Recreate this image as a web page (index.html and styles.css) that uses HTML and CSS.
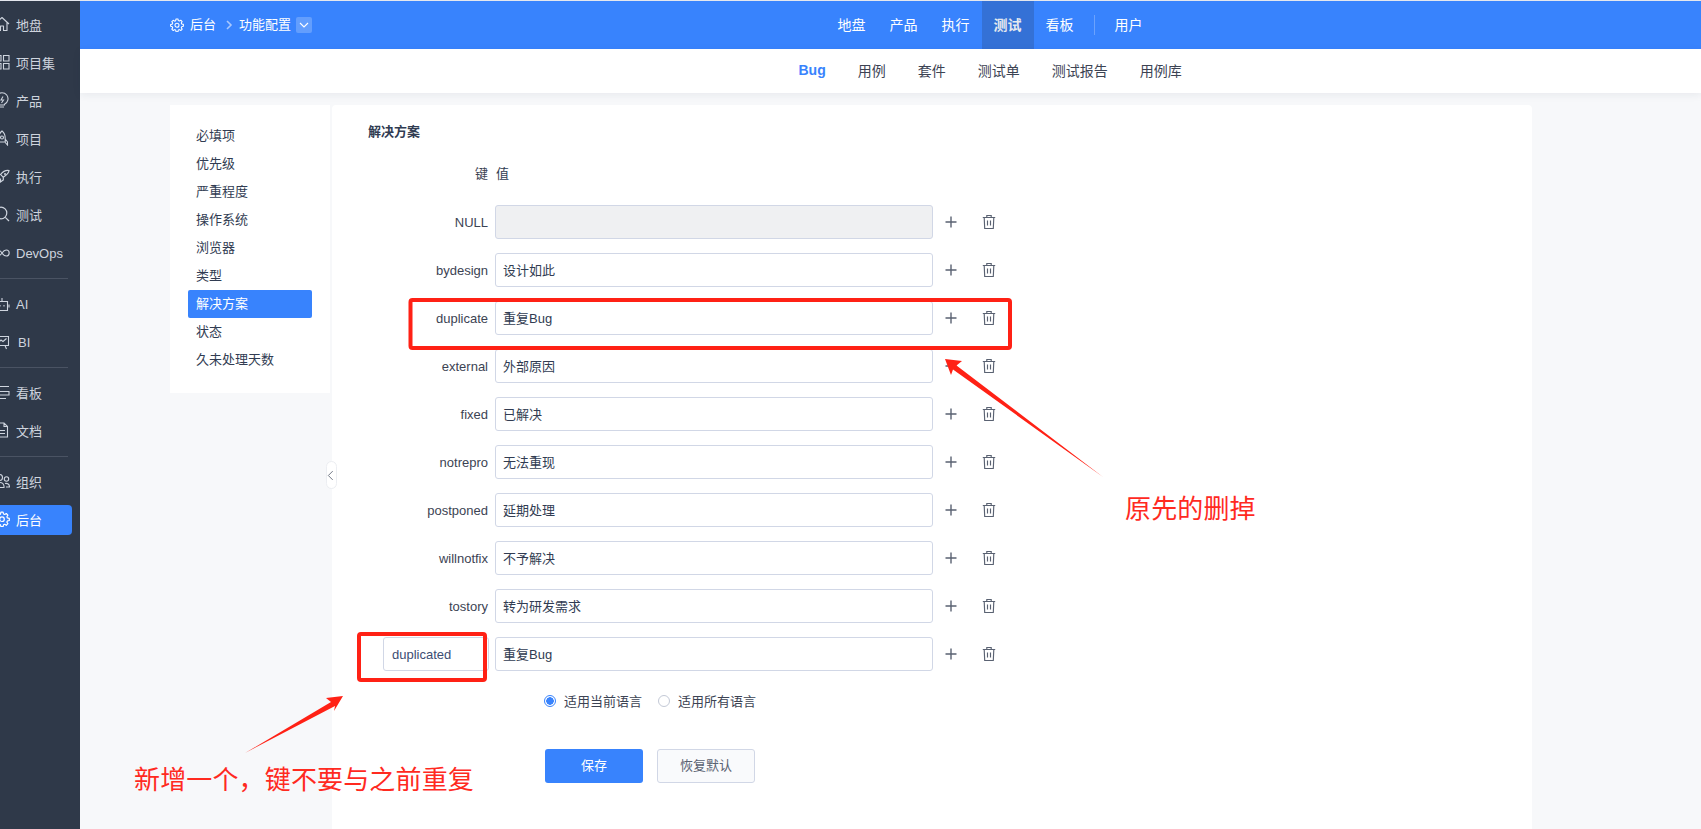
FILE: index.html
```html
<!DOCTYPE html>
<html lang="zh-CN">
<head>
<meta charset="utf-8">
<title>功能配置</title>
<link rel="stylesheet" href="styles.css">
</head>
<body>
<svg class="defs" width="0" height="0" aria-hidden="true">
  <defs>
    <symbol id="i-gear" viewBox="0 0 16 16"><path d="M6.9 1.2h2.2l.4 1.9 1.2.5 1.6-1 1.6 1.6-1 1.6.5 1.2 1.9.4v2.2l-1.9.4-.5 1.2 1 1.6-1.6 1.6-1.6-1-1.2.5-.4 1.9H6.900l-.4-1.900-1.200-.5-1.600 1-1.600-1.600 1-1.600-.5-1.200-1.900-.4V7.500l1.900-.4.5-1.200-1-1.600 1.600-1.600 1.600 1 1.200-.5z" transform="translate(0 -.1)" fill="none" stroke="currentColor" stroke-width="1.200" stroke-linejoin="round"/><circle cx="8" cy="8.200" r="2.300" fill="none" stroke="currentColor" stroke-width="1.200"/></symbol>
    <symbol id="i-home" viewBox="0 0 16 16"><path d="M1 8l7-6.500L15 8M3 6.500V14.500h3.500V10h3v4.500H13V6.500" fill="none" stroke="currentColor" stroke-width="1.100" stroke-linejoin="round"/></symbol>
    <symbol id="i-grid" viewBox="0 0 16 16"><path d="M1.500 1.500h5.500v5.500H1.500zM9.500 1.500H15v5.500H9.500zM1.500 9.500h5.500V15H1.500zM9.500 9.500H15V15H9.500z" fill="none" stroke="currentColor" stroke-width="1.100"/></symbol>
    <symbol id="i-bulb" viewBox="0 0 16 16"><path d="M5.500 12.200A6 6 0 1 1 10.500 12.200V13H5.500zM6 15h4M9 4.500L7 8h2.500L7.500 11" fill="none" stroke="currentColor" stroke-width="1.100"/></symbol>
    <symbol id="i-rocket" viewBox="0 0 16 16"><path d="M8 1c2.500 2 3.200 4.500 3.200 7v4H4.800V8C4.800 5.500 5.500 3 8 1zM4.800 9L2.500 12v3l2.300-2.500M11.200 9l2.300 3v3l-2.300-2.500" fill="none" stroke="currentColor" stroke-width="1.100"/><circle cx="8" cy="7.500" r="1.500" fill="none" stroke="currentColor" stroke-width="1.100"/></symbol>
    <symbol id="i-run" viewBox="0 0 16 16"><path d="M15 2.500c-3.500-.5-6 .8-8.500 4l2.800 2.800c3.200-2.200 5.500-3.800 5.700-6.800z" fill="none" stroke="currentColor" stroke-width="1.200"/><circle cx="11" cy="6" r="1" fill="currentColor"/><path d="M6.500 6.500H3.500L1.500 9h3.500M9.300 9.300v2.700l-2.800 2v-3.500M4.500 10.500L1.500 13.500" fill="none" stroke="currentColor" stroke-width="1.200"/></symbol>
    <symbol id="i-search" viewBox="0 0 16 16"><circle cx="7" cy="7" r="5.800" fill="none" stroke="currentColor" stroke-width="1.200"/><path d="M11.300 11.300L15 15" stroke="currentColor" stroke-width="1.200"/></symbol>
    <symbol id="i-loop" viewBox="0 0 16 16"><path d="M8 8C6.500 5.800 5.300 5 3.800 5a3 3 0 0 0 0 6C5.300 11 6.500 10.200 8 8c1.500-2.200 2.700-3 4.200-3a3 3 0 0 1 0 6C10.700 11 9.500 10.200 8 8z" fill="none" stroke="currentColor" stroke-width="1.100"/></symbol>
    <symbol id="i-robot" viewBox="0 0 16 16"><path d="M2.500 5.500h11v9h-11zM8 5.500V2M1 8.500v3M15 8.500v3M6 9v1.500M10 9v1.500" fill="none" stroke="currentColor" stroke-width="1.100"/></symbol>
    <symbol id="i-chart" viewBox="0 0 16 16"><path d="M1.500 2.500h13v9h-13zM5 11.500l-1.500 3.500M11 11.500l1.500 3.500M4 9l3-3 2 1.500L12.500 4.500" fill="none" stroke="currentColor" stroke-width="1.100"/></symbol>
    <symbol id="i-board" viewBox="0 0 16 16"><path d="M1 2.500h14M1 7.500h14v3.500H3M3 14.500h9" fill="none" stroke="currentColor" stroke-width="1.100"/></symbol>
    <symbol id="i-doc" viewBox="0 0 16 16"><path d="M2.500 1h7.500l3.500 3.500V15h-11zM10 1v3.500h3.500M5 8.500h6M5 11.500h6" fill="none" stroke="currentColor" stroke-width="1.100"/></symbol>
    <symbol id="i-team" viewBox="0 0 16 16"><circle cx="5.500" cy="4.500" r="3" fill="none" stroke="currentColor" stroke-width="1.100"/><circle cx="12.500" cy="6" r="2.200" fill="none" stroke="currentColor" stroke-width="1.100"/><path d="M.8 14.500c0-3.500 2-5 4.700-5s4 1 4.500 3.500v1.500zM11 10.500c2.500-.5 4.500.8 4.500 3.500H12" fill="none" stroke="currentColor" stroke-width="1.100"/></symbol>
    <symbol id="i-plus" viewBox="0 0 16 16"><path d="M8 2.500v11M2.500 8h11" fill="none" stroke="currentColor" stroke-width="1.400"/></symbol>
    <symbol id="i-trash" viewBox="0 0 16 16"><path d="M1.800 3.500h12.400M5.800 3.500V1.500h4.400v2M3.200 3.500l.5 11h8.600l.5-11M6.500 6.500v5M9.500 6.500v5" fill="none" stroke="currentColor" stroke-width="1.150"/></symbol>
  </defs>
</svg>

<div class="app">
  <aside class="sidebar">
    <ul class="nav-group">
      <li class="nav-item"><svg class="nav-icon"><use href="#i-home"/></svg>地盘</li>
      <li class="nav-item"><svg class="nav-icon"><use href="#i-grid"/></svg>项目集</li>
      <li class="nav-item"><svg class="nav-icon"><use href="#i-bulb"/></svg>产品</li>
      <li class="nav-item"><svg class="nav-icon"><use href="#i-rocket"/></svg>项目</li>
      <li class="nav-item"><svg class="nav-icon"><use href="#i-run"/></svg>执行</li>
      <li class="nav-item"><svg class="nav-icon"><use href="#i-search"/></svg>测试</li>
      <li class="nav-item nav-latin"><svg class="nav-icon"><use href="#i-loop"/></svg>DevOps</li>
    </ul>
    <ul class="nav-group nav-split">
      <li class="nav-item nav-latin"><svg class="nav-icon"><use href="#i-robot"/></svg>AI</li>
      <li class="nav-item nav-latin nav-bi"><svg class="nav-icon"><use href="#i-chart"/></svg>BI</li>
    </ul>
    <ul class="nav-group nav-split">
      <li class="nav-item"><svg class="nav-icon"><use href="#i-board"/></svg>看板</li>
      <li class="nav-item"><svg class="nav-icon"><use href="#i-doc"/></svg>文档</li>
    </ul>
    <ul class="nav-group nav-split">
      <li class="nav-item"><svg class="nav-icon"><use href="#i-team"/></svg>组织</li>
      <li class="nav-item nav-active"><svg class="nav-icon"><use href="#i-gear"/></svg>后台</li>
    </ul>
  </aside>

  <div class="workspace">
    <header class="topbar">
      <div class="crumbs">
        <svg class="crumb-gear"><use href="#i-gear"/></svg>
        <span class="crumb-text">后台</span>
        <svg class="crumb-sep" viewBox="0 0 8 10"><path d="M2 1l4 4-4 4" fill="none" stroke="currentColor" stroke-width="1.600"/></svg>
        <span class="crumb-text">功能配置</span>
        <span class="crumb-drop"><svg viewBox="0 0 10 6" width="10" height="6"><path d="M1 1l4 4 4-4" fill="none" stroke="currentColor" stroke-width="1.100"/></svg></span>
      </div>
      <nav class="mainnav">
        <a class="mainnav-link">地盘</a>
        <a class="mainnav-link">产品</a>
        <a class="mainnav-link">执行</a>
        <a class="mainnav-link mainnav-active">测试</a>
        <a class="mainnav-link">看板</a>
        <span class="mainnav-divider"></span>
        <a class="mainnav-link">用户</a>
      </nav>
    </header>

    <nav class="subnav">
      <a class="subnav-link subnav-active">Bug</a>
      <a class="subnav-link">用例</a>
      <a class="subnav-link">套件</a>
      <a class="subnav-link">测试单</a>
      <a class="subnav-link">测试报告</a>
      <a class="subnav-link">用例库</a>
    </nav>

    <div class="content">
      <ul class="sidemenu">
        <li class="sidemenu-item">必填项</li>
        <li class="sidemenu-item">优先级</li>
        <li class="sidemenu-item">严重程度</li>
        <li class="sidemenu-item">操作系统</li>
        <li class="sidemenu-item">浏览器</li>
        <li class="sidemenu-item">类型</li>
        <li class="sidemenu-item sidemenu-active">解决方案</li>
        <li class="sidemenu-item">状态</li>
        <li class="sidemenu-item">久未处理天数</li>
      </ul>

      <main class="panel">
        <button class="collapse-toggle" type="button" aria-label="收起"><svg viewBox="0 0 8 12" width="7" height="11"><path d="M6.500 1L1.500 6l5 5" fill="none" stroke="currentColor" stroke-width="1"/></svg></button>
        <h2 class="panel-title">解决方案</h2>
        <div class="row-head"><span class="key">键</span><span class="head-value">值</span></div>

        <div class="row"><label class="key">NULL</label><input class="field" disabled value=""><span class="acts"><svg class="act"><use href="#i-plus"/></svg><svg class="act"><use href="#i-trash"/></svg></span></div>
        <div class="row"><label class="key">bydesign</label><input class="field" value="设计如此"><span class="acts"><svg class="act"><use href="#i-plus"/></svg><svg class="act"><use href="#i-trash"/></svg></span></div>
        <div class="row"><label class="key">duplicate</label><input class="field" value="重复Bug"><span class="acts"><svg class="act"><use href="#i-plus"/></svg><svg class="act"><use href="#i-trash"/></svg></span></div>
        <div class="row"><label class="key">external</label><input class="field" value="外部原因"><span class="acts"><svg class="act"><use href="#i-plus"/></svg><svg class="act"><use href="#i-trash"/></svg></span></div>
        <div class="row"><label class="key">fixed</label><input class="field" value="已解决"><span class="acts"><svg class="act"><use href="#i-plus"/></svg><svg class="act"><use href="#i-trash"/></svg></span></div>
        <div class="row"><label class="key">notrepro</label><input class="field" value="无法重现"><span class="acts"><svg class="act"><use href="#i-plus"/></svg><svg class="act"><use href="#i-trash"/></svg></span></div>
        <div class="row"><label class="key">postponed</label><input class="field" value="延期处理"><span class="acts"><svg class="act"><use href="#i-plus"/></svg><svg class="act"><use href="#i-trash"/></svg></span></div>
        <div class="row"><label class="key">willnotfix</label><input class="field" value="不予解决"><span class="acts"><svg class="act"><use href="#i-plus"/></svg><svg class="act"><use href="#i-trash"/></svg></span></div>
        <div class="row"><label class="key">tostory</label><input class="field" value="转为研发需求"><span class="acts"><svg class="act"><use href="#i-plus"/></svg><svg class="act"><use href="#i-trash"/></svg></span></div>
        <div class="row"><span class="key key-edit"><input class="field field-key" value="duplicated"></span><input class="field" value="重复Bug"><span class="acts"><svg class="act"><use href="#i-plus"/></svg><svg class="act"><use href="#i-trash"/></svg></span></div>

        <div class="langs">
          <span class="radio radio-on"></span><span class="lang-text">适用当前语言</span>
          <span class="radio radio-second"></span><span class="lang-text">适用所有语言</span>
        </div>
        <div class="form-actions">
          <button class="btn btn-primary" type="button">保存</button>
          <button class="btn btn-default" type="button">恢复默认</button>
        </div>
      </main>
    </div>
  </div>
</div>

<svg class="marks" viewBox="0 0 1701 829" width="1701" height="829" aria-hidden="true">
  <rect class="mark-box" x="410.500" y="300" width="599.500" height="48" rx="2"/>
  <rect class="mark-box" x="359" y="634" width="126" height="46" rx="2"/>
  <polygon class="mark-fill" points="945,359 962,361 956.500,365.500 1103,477 953,369.500 951,375"/>
  <polygon class="mark-fill" points="343,696 326,698 331,702 245,753 335,706 334,711"/>
</svg>
<div class="note note-a">原先的删掉</div>
<div class="note note-b">新增一个，键不要与之前重复</div>
</body>
</html>
```
FILE: styles.css
```css
* { box-sizing: border-box; }
html, body { margin: 0; height: 100%; }
body {
  position: relative;
  width: 1701px;
  height: 829px;
  overflow: hidden;
  padding-top: 1px;
  background: #e4e7ee;
  font-family: "Liberation Sans", "Noto Sans CJK SC", sans-serif;
  font-size: 13px;
  color: #313c52;
}
ul { list-style: none; margin: 0; padding: 0; }
a { text-decoration: none; color: inherit; }
.defs { position: absolute; }

.app { display: flex; height: 828px; }

/* sidebar */
.sidebar {
  flex: 0 0 80px;
  overflow: hidden;
  background: #2f3949;
  padding-top: 9px;
  color: #ced4de;
}
.nav-group { display: flex; flex-direction: column; gap: 8px; }
.nav-split { margin-top: 10px; padding-top: 10px; border-top: 1px solid #4a5363; margin-right: 12px; }
.nav-item {
  display: flex;
  align-items: center;
  gap: 6px;
  width: 80px;
  height: 30px;
  margin-left: -8px;
  padding: 0 0 2px 2px;
  border-radius: 4px;
  font-size: 13px;
  white-space: nowrap;
}
.nav-icon { flex: none; width: 16px; height: 16px; }
.nav-latin { padding-bottom: 0; }
.nav-bi { gap: 8px; }
.nav-active { background: #3883fd; color: #fff; }

/* top */
.workspace { flex: 1; display: flex; flex-direction: column; min-width: 0; }
.topbar {
  display: flex;
  align-items: stretch;
  flex: 0 0 48px;
  padding-left: 90px;
  background: #3883fd;
  color: #fff;
}
.crumbs { display: flex; align-items: center; width: 142px; font-size: 13px; }
.crumb-text { padding-bottom: 3px; }
.crumb-gear { width: 14px; height: 14px; margin-right: 6px; }
.crumb-sep { width: 8px; height: 10px; margin: 0 6px 0 9px; color: #a9c8fd; }
.crumb-drop {
  display: flex;
  align-items: center;
  justify-content: center;
  width: 16px;
  height: 16px;
  margin-left: 5px;
  border-radius: 2px;
  background: rgba(255, 255, 255, .22);
}
.mainnav { display: flex; align-items: center; margin-left: 514px; font-size: 14px; }
.mainnav-link { display: flex; align-items: center; height: 48px; padding: 0 12.500px 2px 11.500px; }
.mainnav-active { background: #3471d6; font-weight: 700; color: #e6e9ef; }
.mainnav-divider { width: 1px; height: 20px; margin: 0 8px; background: #6ba2fd; }

.subnav {
  position: relative;
  display: flex;
  align-items: center;
  gap: 32px;
  flex: 0 0 44px;
  padding: 0 0 2px 718.500px;
  background: #fff;
  font-size: 14px;
  color: #3c4353;
  box-shadow: 0 2px 8px rgba(30, 40, 70, .07);
}
.subnav-active { color: #3883fd; font-weight: 700; }

/* content */
.content {
  flex: 1;
  display: flex;
  align-items: flex-start;
  gap: 2px;
  padding: 12px 0 0 90px;
  background: #f7f8fa;
  min-height: 0;
}
.sidemenu {
  flex: 0 0 160px;
  padding: 17px 18px 19px;
  background: #fff;
}
.sidemenu-item {
  height: 28px;
  padding-left: 8px;
  line-height: 28px;
  border-radius: 2px;
  font-size: 13px;
}
.sidemenu-active { background: #3883fd; color: #fff; }

.panel {
  position: relative;
  flex: 0 0 1200px;
  height: 724px;
  padding: 17px 0 0 36px;
  border-radius: 4px 4px 0 0;
  background: #fff;
}
.collapse-toggle {
  position: absolute;
  left: -6px;
  top: 356px;
  display: flex;
  align-items: center;
  justify-content: center;
  width: 11px;
  height: 28px;
  padding: 0 2px 0 0;
  border: 1px solid #eceef2;
  border-radius: 6px;
  background: #fff;
  color: #5b6372;
}
.panel-title { margin: 0; font-size: 13px; line-height: 20px; font-weight: 700; color: #313c52; }

.row-head {
  display: flex;
  align-items: center;
  height: 20px;
  margin: 20px 0 23px 15px;
}
.key { flex: 0 0 106px; padding-right: 1px; text-align: right; font-size: 13px; color: #3c4353; }
.head-value { margin-left: 7px; }
.row {
  display: flex;
  align-items: center;
  height: 34px;
  margin: 0 0 14px 15px;
}
.field {
  flex: 0 0 438px;
  width: 438px;
  height: 34px;
  margin-left: 6px;
  padding: 0 7px 2px;
  border: 1px solid #d1d7e6;
  border-radius: 3px;
  background: #fff;
  font: inherit;
  font-size: 13px;
  color: #313c52;
  outline: none;
}
.field:disabled { background: #eff0f2; }
.key-edit { padding-right: 0; }
.field-key { display: block; width: 106px; margin-left: 0; padding: 0 8px; color: #3c4d73; }

.acts { display: flex; align-items: center; color: #5a6272; margin-left: 10px; gap: 22px; }
.act { width: 16px; height: 16px; }

.langs { display: flex; align-items: center; height: 20px; margin: 20px 0 0 176px; }
.radio {
  width: 12px;
  height: 12px;
  border: 1px solid #c3c9d6;
  border-radius: 50%;
  background: #fff;
}
.radio-on { border-color: #3883fd; background: radial-gradient(circle, #3883fd 0 3.500px, #fff 4px); }
.radio-second { margin-left: 16px; }
.lang-text { margin-left: 8px; font-size: 13px; color: #3c4353; padding-bottom: 1px; }

.form-actions { display: flex; gap: 14px; margin: 38px 0 0 177px; }
.btn {
  width: 98px;
  height: 34px;
  padding: 0 0 3px;
  border-radius: 3px;
  border: 1px solid transparent;
  font: inherit;
  font-size: 13px;
}
.btn-primary { background: #3883fd; color: #fff; }
.btn-default { background: #f9fafc; border-color: #d1d7e6; color: #5a6272; }

/* red annotations drawn over the screenshot */
.marks { position: absolute; left: 0; top: 0; pointer-events: none; }
.mark-box { fill: none; stroke: #ff2115; stroke-width: 4; }
.mark-fill { fill: #ff2115; }
.note {
  position: absolute;
  font-family: "Noto Sans CJK SC", sans-serif;
  font-size: 26px;
  line-height: 36px;
  letter-spacing: .15px;
  color: #ff2a1f;
  white-space: nowrap;
}
.note-a { left: 1125px; top: 489px; }
.note-b { left: 134px; top: 760px; }
```
